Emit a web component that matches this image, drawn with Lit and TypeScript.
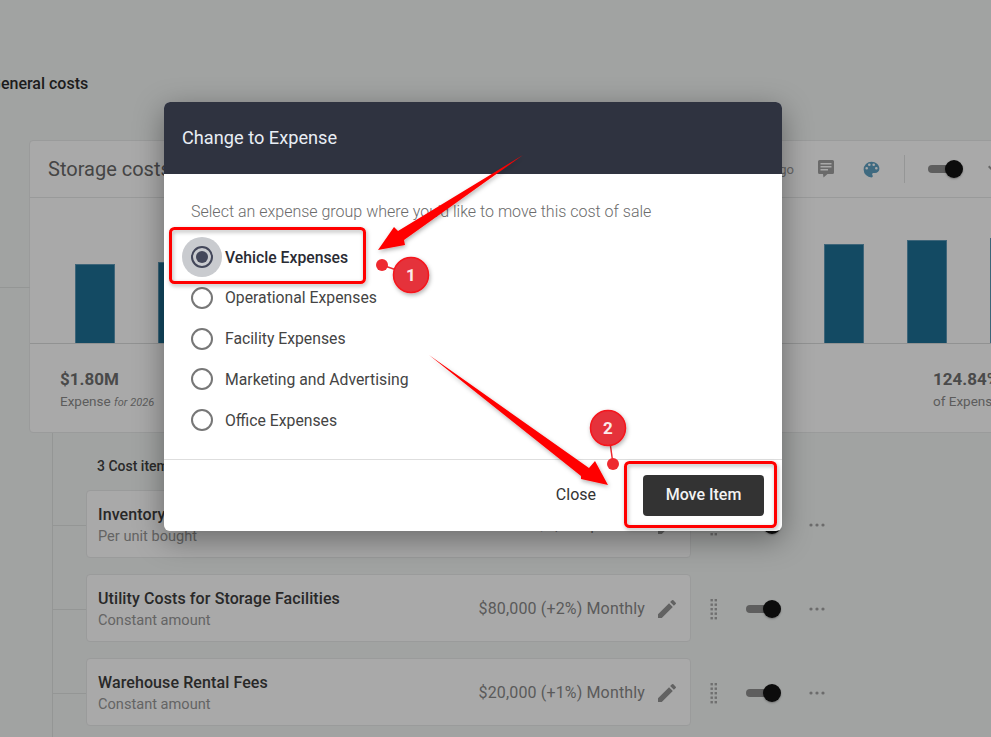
import { LitElement, html, css, svg } from 'lit';
import { customElement } from 'lit/decorators.js';

const BARS = [79, 81, 83, 85, 87, 89, 91, 93, 96, 99, 103, 105];

const OPTIONS = [
  'Vehicle Expenses',
  'Operational Expenses',
  'Facility Expenses',
  'Marketing and Advertising',
  'Office Expenses',
];

const ITEMS = [
  { name: 'Inventory Purchase Costs', kind: 'Per unit bought', amount: '$1,200 per unit' },
  { name: 'Utility Costs for Storage Facilities', kind: 'Constant amount', amount: '$80,000 (+2%) Monthly' },
  { name: 'Warehouse Rental Fees', kind: 'Constant amount', amount: '$20,000 (+1%) Monthly' },
];

const grip = html`<svg class="grip" width="8" height="21" viewBox="0 0 8 21">
  ${[0, 1, 2, 3, 4].map(
    (r) => svg`<rect x="0.5" y=${r * 4.5} width="2.4" height="2.4"/><rect x="4.6" y=${r * 4.5} width="2.4" height="2.4"/>`
  )}
</svg>`;

const pencil = html`<svg class="pencil" width="24" height="24" viewBox="0 0 24 24">
  <path d="M3 17.25V21h3.75L17.81 9.94l-3.75-3.75L3 17.25zM20.71 7.04a1 1 0 0 0 0-1.41l-2.34-2.34a1 1 0 0 0-1.41 0l-1.83 1.83 3.75 3.75 1.83-1.83z"/>
</svg>`;

const toggle = html`<span class="toggle"><span class="track"></span><span class="knob"></span></span>`;

@customElement('app-root')
export class AppRoot extends LitElement {
  static styles = css`
    :host {
      display: block;
      position: relative;
      width: 991px;
      height: 737px;
      overflow: hidden;
      background: #a1a3a2;
      font-family: Roboto, 'Liberation Sans', sans-serif;
      color: #2a2a2a;
    }

    .heading {
      margin: 0 0 0 -10px;
      padding-top: 75px;
      height: 140px;
      box-sizing: border-box;
      font-size: 16px;
      line-height: 18px;
      font-weight: 500;
      color: #1c1c1c;
      white-space: nowrap;
    }

    .card {
      position: relative;
      margin-left: 29px;
      width: 1040px;
      height: 293px;
      box-sizing: border-box;
      background: #a9a9a9;
      border: 1px solid #9a9b9b;
      border-radius: 4px;
    }

    .card::before {
      content: '';
      position: absolute;
      left: -30px;
      top: 146px;
      width: 30px;
      height: 1px;
      background: #949695;
    }

    .card-head {
      display: flex;
      align-items: center;
      height: 56px;
      padding: 0 62px 0 18px;
      border-bottom: 1px solid #999a9a;
    }

    .card-title {
      font-size: 20px;
      color: #454545;
    }

    .tools {
      margin-left: auto;
      display: flex;
      align-items: center;
    }

    .ago {
      font-size: 13px;
      color: #666;
      margin-right: 24px;
    }

    .tools svg {
      display: block;
    }

    .palette {
      margin-left: 26.5px;
    }

    .divider {
      width: 1px;
      height: 28px;
      background: #959696;
      margin: 0 22px 0 22.5px;
    }

    .chevron {
      margin-left: 19px;
    }

    .chart {
      display: flex;
      align-items: flex-end;
      gap: 43.2px;
      height: 146px;
      padding-left: 45px;
      box-sizing: border-box;
      border-bottom: 1px solid #919292;
    }

    .bar {
      flex: none;
      width: 40px;
      box-sizing: border-box;
      background: #134a63;
      border: 1px solid #3e6579;
      border-bottom: none;
    }

    .stats {
      display: flex;
      justify-content: space-between;
      padding: 25px 35px 0 30px;
    }

    .stat {
      width: 100px;
      white-space: nowrap;
    }

    .stat b {
      display: block;
      font-size: 17px;
      line-height: 20px;
      font-weight: 700;
      color: #4a4a4a;
    }

    .stat span {
      display: block;
      margin-top: 4px;
      font-size: 13.5px;
      line-height: 17px;
      color: #5c5c5c;
    }

    .stat i {
      font-size: 11px;
    }

    .tree {
      margin-left: 52px;
      border-left: 1px solid #949695;
      padding: 0 0 40px 33px;
      box-sizing: border-box;
    }

    .count {
      padding: 25px 0 0 11px;
      height: 57px;
      box-sizing: border-box;
      font-size: 14px;
      line-height: 17px;
      font-weight: 500;
      color: #2a2a2a;
    }

    .line {
      display: flex;
      align-items: center;
      height: 68px;
      margin-bottom: 16px;
    }

    .line > svg,
    .line > .toggle {
      margin-top: 2px;
    }

    .item {
      position: relative;
      flex: none;
      display: flex;
      align-items: center;
      width: 605px;
      height: 68px;
      box-sizing: border-box;
      padding: 2px 11px 0 11px;
      background: #a9a9a9;
      border: 1px solid #9a9b9b;
      border-radius: 4px;
    }

    .item::before {
      content: '';
      position: absolute;
      left: -35px;
      top: 34px;
      width: 34px;
      height: 1px;
      background: #949695;
    }

    .name {
      font-size: 16px;
      line-height: 19px;
      font-weight: 500;
      letter-spacing: 0.1px;
      color: #282828;
    }

    .kind {
      margin-top: 3px;
      font-size: 14.6px;
      line-height: 18px;
      color: #646464;
    }

    .amount {
      margin-left: auto;
      padding-bottom: 2px;
      font-size: 16px;
      letter-spacing: 0.15px;
      color: #5a5a5a;
      white-space: nowrap;
    }

    .pencil {
      flex: none;
      margin-left: 10px;
      fill: #626262;
    }

    .grip {
      flex: none;
      margin-left: 19px;
      fill: #6f6f6f;
    }

    .toggle {
      position: relative;
      flex: none;
      display: block;
      width: 36px;
      height: 18px;
    }

    .line .toggle {
      margin-left: 27px;
    }

    .track {
      position: absolute;
      left: 1px;
      top: 5px;
      width: 27px;
      height: 8px;
      border-radius: 4px;
      background: #5e5e5e;
    }

    .knob {
      position: absolute;
      right: 0;
      top: 0;
      width: 18px;
      height: 18px;
      border-radius: 50%;
      background: #0c0c0c;
      box-shadow: 0 1px 2px rgba(0, 0, 0, 0.3);
    }

    .more {
      flex: none;
      margin-left: 28px;
      fill: #6b6b6b;
    }

    .modal {
      position: absolute;
      left: 164px;
      top: 102px;
      width: 618px;
      height: 429px;
      display: flex;
      flex-direction: column;
      background: #fff;
      border-radius: 6px;
      overflow: hidden;
    }

    .shadow {
      position: absolute;
      left: 164px;
      top: 102px;
      width: 618px;
      height: 429px;
      border-radius: 6px;
      box-shadow: 0 8px 30px rgba(0, 0, 0, 0.38);
    }

    .modal-head {
      flex: none;
      display: flex;
      align-items: center;
      height: 71px;
      padding: 0 0 1px 18px;
      background: #2f3340;
      color: #e9eef5;
      font-size: 18.2px;
    }

    .modal-body {
      flex: 1;
      padding: 28px 27px 0;
    }

    .hint {
      margin: 0 0 14.8px;
      font-size: 16px;
      line-height: 20px;
      font-weight: 300;
      color: #6b6b6b;
      white-space: nowrap;
    }

    .option {
      display: flex;
      align-items: center;
      height: 40.75px;
      font-size: 15.75px;
      color: #444;
    }

    .option.on {
      font-weight: 500;
      color: #2a2c34;
    }

    .radio {
      position: relative;
      flex: none;
      width: 18px;
      height: 18px;
      margin: 0 12px 0 0;
      border: 2px solid #777;
      border-radius: 50%;
    }

    .on .radio {
      border-color: #43475a;
    }

    .on .radio::before {
      content: '';
      position: absolute;
      left: -11px;
      top: -11px;
      width: 40px;
      height: 40px;
      border-radius: 50%;
      background: #c9cbcf;
    }

    .on .radio::after {
      content: '';
      position: absolute;
      left: 3px;
      top: 3px;
      width: 12px;
      height: 12px;
      border-radius: 50%;
      background: #43475a;
    }

    .on .ring {
      position: absolute;
      left: -2px;
      top: -2px;
      width: 18px;
      height: 18px;
      border: 2px solid #43475a;
      border-radius: 50%;
      z-index: 1;
    }

    .modal-foot {
      flex: none;
      display: flex;
      align-items: center;
      justify-content: flex-end;
      gap: 47px;
      height: 72px;
      padding-right: 18px;
      box-sizing: border-box;
      border-top: 1px solid #dedede;
    }

    .close {
      font-size: 16px;
      line-height: 18px;
      padding-bottom: 2px;
      color: #333;
    }

    .move {
      display: flex;
      align-items: center;
      justify-content: center;
      width: 121px;
      height: 41px;
      box-sizing: border-box;
      padding-bottom: 2px;
      border-radius: 4px;
      background: #333;
      color: #f2f2f2;
      font-size: 16px;
      font-weight: 500;
    }

    .marks {
      position: absolute;
      left: 0;
      top: 0;
      pointer-events: none;
    }

    .badge-text {
      font-family: Roboto, 'Liberation Sans', sans-serif;
      font-size: 17px;
      font-weight: 700;
      fill: #fbeaea;
      text-anchor: middle;
    }
  `;

  render() {
    return html`
      <h2 class="heading">General costs</h2>

      <section class="card">
        <header class="card-head">
          <span class="card-title">Storage costs</span>
          <div class="tools">
            <span class="ago">2 days ago</span>
            <svg width="16" height="18" viewBox="0 0 16 18" fill="#6a6a6a" fill-rule="evenodd">
              <path d="M1.500 0h13A1.500 1.500 0 0 1 16 1.500v11a1.500 1.500 0 0 1-1.500 1.500H9.500L5.500 17.500 5 14H1.500A1.500 1.500 0 0 1 0 12.500v-11A1.500 1.500 0 0 1 1.500 0zM2.500 3v1.500h11V3zM2.500 6v1.500h11V6zM2.500 9v1.500h7.500V9z"/>
            </svg>
            <svg class="palette" width="21" height="21" viewBox="0 0 24 24" fill="#3f6a80">
              <path d="M12 3a9 9 0 0 0 0 18c.83 0 1.500-.67 1.500-1.500 0-.39-.15-.74-.39-1.010-.23-.26-.38-.61-.38-.99 0-.83.67-1.500 1.500-1.500H16c2.760 0 5-2.240 5-5 0-4.420-4.030-8-9-8zm-5.500 9a1.500 1.500 0 1 1 0-3 1.500 1.500 0 0 1 0 3zm3-4a1.500 1.500 0 1 1 0-3 1.500 1.500 0 0 1 0 3zm5 0a1.500 1.500 0 1 1 0-3 1.500 1.500 0 0 1 0 3zm3 4a1.500 1.500 0 1 1 0-3 1.500 1.500 0 0 1 0 3z"/>
            </svg>
            <span class="divider"></span>
            ${toggle}
            <svg class="chevron" width="24" height="24" viewBox="0 0 24 24" fill="#666">
              <path d="M16.590 8.590 12 13.170 7.410 8.590 6 10l6 6 6-6z"/>
            </svg>
          </div>
        </header>
        <div class="chart">
          ${BARS.map((h) => html`<div class="bar" style="height:${h}px"></div>`)}
        </div>
        <div class="stats">
          <div class="stat"><b>$1.80M</b><span>Expense <i>for 2026</i></span></div>
          <div class="stat"><b>124.84%</b><span>of Expense</span></div>
        </div>
      </section>

      <div class="tree">
        <div class="count">3 Cost items</div>
        ${ITEMS.map(
          (it) => html`
            <div class="line">
              <div class="item">
                <div>
                  <div class="name">${it.name}</div>
                  <div class="kind">${it.kind}</div>
                </div>
                <span class="amount">${it.amount}</span>
                ${pencil}
              </div>
              ${grip} ${toggle}
              <svg class="more" width="16" height="4" viewBox="0 0 16 4">
                <circle cx="2" cy="2" r="1.600"/><circle cx="8" cy="2" r="1.600"/><circle cx="14" cy="2" r="1.600"/>
              </svg>
            </div>
          `
        )}
      </div>

      <div class="shadow"></div>
      <div class="modal">
        <div class="modal-head">Change to Expense</div>
        <div class="modal-body">
          <p class="hint">Select an expense group where you'd like to move this cost of sale</p>
          ${OPTIONS.map(
            (o, i) => html`
              <div class="option ${i === 0 ? 'on' : ''}">
                <span class="radio"><span class="ring"></span></span>
                <span class="label">${o}</span>
              </div>
            `
          )}
        </div>
        <div class="modal-foot">
          <span class="close">Close</span>
          <span class="move">Move Item</span>
        </div>
      </div>

      <svg class="marks" width="991" height="737" viewBox="0 0 991 737">
        <defs>
          <filter id="soft" x="-20%" y="-20%" width="140%" height="140%">
            <feDropShadow dx="1" dy="2" stdDeviation="2" flood-color="#000" flood-opacity="0.3"/>
          </filter>
        </defs>
        <g filter="url(#soft)">
          <rect x="170.500" y="228.500" width="194" height="54" rx="4" fill="none" stroke="#f00" stroke-width="3"/>
          <rect x="625.500" y="462.500" width="150" height="64" rx="4" fill="none" stroke="#f00" stroke-width="3"/>
          <polygon fill="#f00" points="523,155 404,240 405,245 378,250 394,227 398,231"/>
          <polygon fill="#f00" points="429,355 589,468 595,461 608,485 581,479 581,476"/>
        </g>
        <line x1="382" y1="265" x2="411" y2="275" stroke="#ee2a30" stroke-width="1.500"/>
        <circle cx="382" cy="265" r="6" fill="#ee2a30"/>
        <circle cx="411" cy="275" r="17.500" fill="#e5333b" stroke="#f5161d" stroke-width="1.500" filter="url(#soft)"/>
        <text class="badge-text" x="411" y="281">1</text>
        <line x1="608" y1="428" x2="613" y2="464" stroke="#ee2a30" stroke-width="1.500"/>
        <circle cx="613" cy="464" r="6" fill="#ee2a30"/>
        <circle cx="608" cy="428" r="17.500" fill="#e5333b" stroke="#f5161d" stroke-width="1.500" filter="url(#soft)"/>
        <text class="badge-text" x="608" y="434">2</text>
      </svg>
    `;
  }
}
